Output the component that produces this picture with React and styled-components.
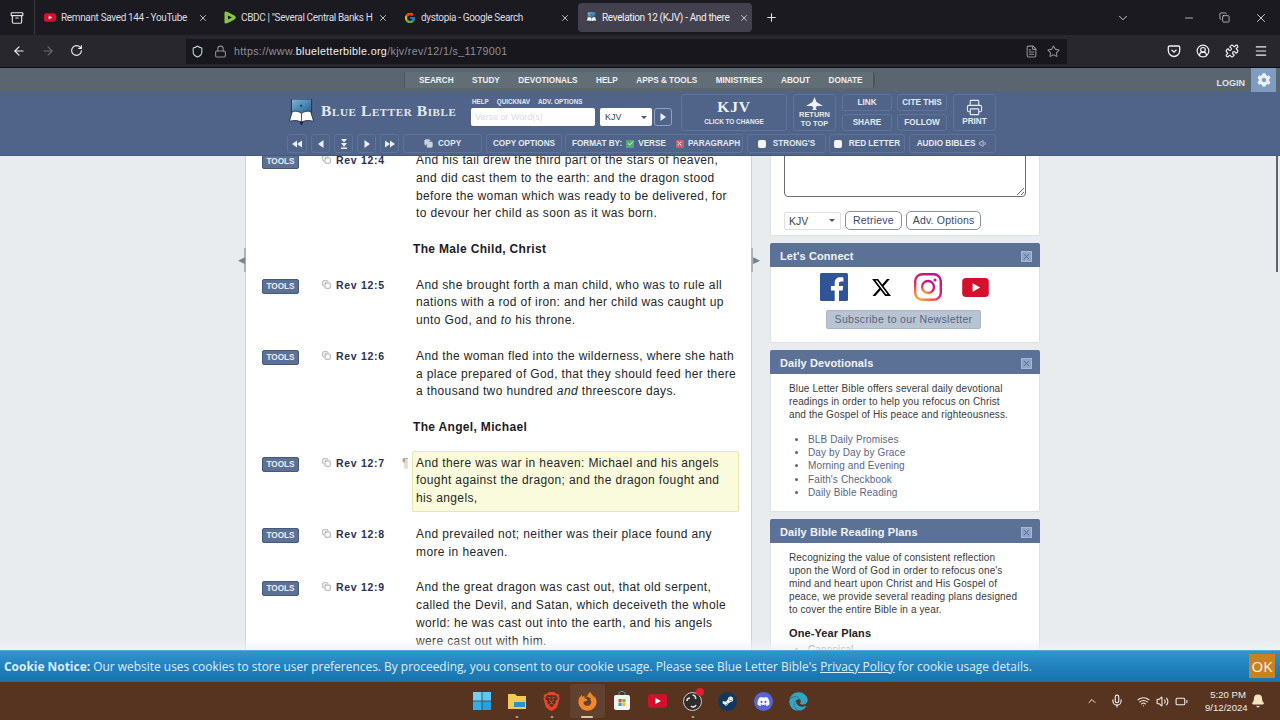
import React from "react";
import styled, {createGlobalStyle} from "styled-components";
import {
    Archive, ArrowLeft, ArrowRight, Bell, Check, ChevronDown, ChevronUp, Copy, FileText, Lock, Menu, Mic, Minus,
    Plus, Printer, Puzzle, RotateCw, Shield, Star, Volume1, Volume2, Wifi, X, CircleUserRound, Battery
} from "lucide-react";
import {FaCog, FaDiscord, FaEdge, FaFirefoxBrowser, FaSteamSymbol} from "react-icons/fa";
import {FaXTwitter} from "react-icons/fa6";
import {FcGoogle} from "react-icons/fc";
import {SiBrave} from "react-icons/si";

const GlobalStyle = createGlobalStyle`
  html, body {
    margin: 0;
    padding: 0;
    width: 1280px;
    height: 720px;
    overflow: hidden;
    background: #e8ecef;
    font-family: "Liberation Sans", Arial, sans-serif;
  }
  * {
    box-sizing: border-box;
  }
`

const Page = styled.div`
  width: 1280px;
  height: 720px;
  display: flex;
  flex-direction: column;
  overflow: hidden;
`

/* browser chrome */
const TabStrip = styled.div`
  height: 35px;
  flex: none;
  background: #1b1a20;
  display: flex;
  align-items: center;
  color: #e4e4e8;
`

const SideToggle = styled.div`
  width: 35px;
  height: 35px;
  display: flex;
  align-items: center;
  justify-content: center;
  border-right: 1px solid #3a3940;
`

const Tab = styled.div`
  width: ${props => props.$width}px;
  height: 29px;
  margin-left: ${props => props.$left || 0}px;
  padding: 0 5px 0 ${props => props.$padLeft || 9}px;
  display: flex;
  align-items: center;
  gap: 5px;
  font-family: Roboto, sans-serif;
  font-size: 10px;
  letter-spacing: -.35px;
  border-radius: 4px;
  background: ${props => props.$active ? "#42414d" : "transparent"};
  color: ${props => props.$active ? "#f0f0f4" : "#dcdce0"};
`

const TabTitle = styled.span`
  width: ${props => props.$width}px;
  flex: none;
  white-space: nowrap;
`

const TabClose = styled.span`
  margin-left: auto;
  margin-right: ${props => props.$right || 0}px;
  display: flex;
  color: #d8d8dc;
`

const Favicon = styled.span`
  width: 12px;
  height: 12px;
  flex: none;
  display: flex;
  align-items: center;
  justify-content: center;
`

const WindowButtons = styled.div`
  margin-left: auto;
  display: flex;
  align-items: center;
  gap: 24px;
  padding-right: 12px;
`

const NavBar = styled.div`
  height: 33px;
  flex: none;
  background: #28272e;
  border-bottom: 1px solid #0c0c0f;
  display: flex;
  align-items: center;
  color: #f0f0f4;
`

const NavButtons = styled.div`
  width: 186px;
  padding-left: 12px;
  display: flex;
  gap: 15px;
`

const UrlBar = styled.div`
  width: 881px;
  height: 25px;
  background: #18171d;
  display: flex;
  align-items: center;
  padding: 0 7px 0 5px;
  gap: 7px;
  font-size: 10.7px;
  letter-spacing: .34px;
  color: #8f8f98;
`

const UrlHost = styled.span`
  color: #f2f2f5;
`

const UrlEnd = styled.div`
  margin-left: auto;
  display: flex;
  gap: 9px;
`

const NavRight = styled.div`
  margin-left: 100px;
  display: flex;
  gap: 15px;
`

/* site header */
const SiteNav = styled.div`
  height: 24px;
  flex: none;
  background: #5a666f;
  display: flex;
  align-items: center;
  padding-left: 404px;
  position: relative;
`

const SiteNavLinks = styled.div`
  height: 16px;
  width: 470px;
  background: #626e76;
  border-left: 1px solid #4a555d;
  border-right: 1px solid #4a555d;
  display: flex;
  align-items: center;
  padding-left: 14px;
  gap: 18.5px;
  box-shadow: 4px 0 0 -3px #4a555d;
`

const SiteNavLink = styled.span`
  font-size: 8.2px;
  font-weight: 700;
  color: #eef1f4;
  white-space: nowrap;
`

const LoginArea = styled.div`
  margin-left: auto;
  display: flex;
  align-items: center;
  height: 100%;
  padding-right: 4px;
  gap: 6px;
`

const LoginText = styled.span`
  font-size: 9px;
  font-weight: 700;
  color: #dfe5ea;
  padding-top: 5px;
`

const GearBox = styled.span`
  width: 25px;
  height: 24px;
  background: #7f9cc0;
  display: flex;
  align-items: center;
  justify-content: center;
  color: #eef3f8;
`

const Toolbar = styled.div`
  height: 64px;
  flex: none;
  background: #4f6488;
  display: flex;
  flex-direction: column;
  align-items: center;
  padding-left: 4px;
  border-bottom: 1px solid #44587a;
`

const ToolRow = styled.div`
  width: 710px;
  height: ${props => props.$height}px;
  margin-top: ${props => props.$top}px;
  display: flex;
  gap: ${props => props.$gap || 0}px;
  flex: none;
`

const ToolBox = styled.div`
  width: ${props => props.$width}px;
  height: ${props => props.$height || 19}px;
  margin-left: ${props => props.$left || 0}px;
  flex: none;
  border: 1px solid #5d7399;
  border-radius: 3px;
  display: flex;
  flex-direction: ${props => props.$column ? "column" : "row"};
  align-items: center;
  justify-content: center;
  gap: ${props => props.$spread || 0}px;
  font-size: 8.2px;
  line-height: 11px;
  font-weight: 700;
  color: #e4eaf1;
  text-align: center;
  white-space: nowrap;
`

const LogoLink = styled.div`
  width: 184px;
  padding: 4px 0 0 1px;
  display: flex;
  gap: 6px;
  align-items: center;
  height: 32px;
`

const LogoText = styled.span`
  font-family: "Liberation Serif", serif;
  font-variant: small-caps;
  font-weight: 700;
  font-size: 15.6px;
  line-height: 16px;
  letter-spacing: .6px;
  color: #e3e9f0;
  white-space: nowrap;
  margin-top: -2px;
`

const SearchArea = styled.div`
  width: 210px;
  display: flex;
  flex-direction: column;
`

const MiniLinks = styled.div`
  display: flex;
  gap: 8px;
  height: 14px;
  padding-left: 1px;
  font-size: 6.3px;
  font-weight: 700;
  color: #e4eaf1;
  align-items: center;
`

const SearchInputs = styled.div`
  display: flex;
  align-items: center;
  gap: 5px;
  height: 18px;
`

const VerseInput = styled.div`
  width: 124px;
  height: 18px;
  background: #fff;
  border-radius: 2px;
  padding-left: 4px;
  font-size: 9px;
  line-height: 18px;
  color: #d9dce2;
`

const VersionSelect = styled.div`
  width: 52px;
  height: 18px;
  background: #fff;
  border-radius: 2px;
  display: flex;
  justify-content: space-between;
  align-items: center;
  padding: 0 5px;
  font-size: 9px;
  color: #444;
`

const Caret = styled.span`
  width: 0;
  height: 0;
  border-left: 3px solid transparent;
  border-right: 3px solid transparent;
  border-top: 3px solid #555;
`

const GoButton = styled.span`
  width: 18px;
  height: 18px;
  margin-left: -3px;
  border: 1px solid #8ea2bf;
  border-radius: 3px;
  display: flex;
  align-items: center;
  justify-content: center;
`

const KjvTitle = styled.span`
  font-family: "Liberation Serif", serif;
  font-size: 15.5px;
  line-height: 15px;
  font-weight: 700;
  letter-spacing: .8px;
  color: #eef2f6;
`

const KjvHint = styled.span`
  font-size: 6.4px;
  line-height: 9px;
  margin-top: 3px;
`

const ReturnLabel = styled.span`
  font-size: 7.4px;
  line-height: 9px;
`

const ToolPair = styled.div`
  display: flex;
  flex-direction: column;
  justify-content: space-between;
  margin-left: ${props => props.$left || 0}px;
`

const Tick = styled.span`
  width: 8px;
  height: 8px;
  flex: none;
  border-radius: ${props => props.$plain ? "2px" : "1px"};
  background: ${props => props.$color || "#f2f4f7"};
  display: flex;
  align-items: center;
  justify-content: center;
  color: #fff;
  margin-left: ${props => props.$side || 0}px;
`

const FormatGroup = styled(ToolBox)`
  justify-content: flex-start;
  padding-left: 6px;
  gap: 4px;
`

/* content */
const Content = styled.div`
  flex: 1;
  min-height: 0;
  background: #e8ecef;
  display: flex;
  justify-content: center;
  gap: 18px;
  padding-left: 5px;
  overflow: hidden;
  position: relative;
`

const BottomFade = styled.div`
  position: absolute;
  left: 0;
  right: 0;
  bottom: 0;
  height: 12px;
  background: linear-gradient(rgba(240, 243, 246, 0), rgba(240, 243, 246, .85));
`

const ScrollThumb = styled.div`
  position: absolute;
  right: 2px;
  top: 0;
  width: 2px;
  height: 116px;
  background: #60656b;
`

const MainColumn = styled.div`
  width: 507px;
  flex: none;
  background: #fff;
  border-left: 1px solid #ccd3da;
  border-right: 1px solid #ccd3da;
  position: relative;
`

const VerseList = styled.div`
  margin-top: -4px;
  padding-left: 16px;
  color: #262626;
`

const SideHandle = styled.span`
  position: absolute;
  top: 92px;
  ${props => props.$right ? "right: -8px;" : "left: -8px;"}
  width: 8px;
  height: 24px;
  display: flex;
  align-items: center;
  justify-content: center;
  color: #75818e;
  font-size: 9px;
  border-${props => props.$right ? "left" : "right"}: 2px solid #aab3bc;
`

const SectionHeading = styled.h3`
  margin: 0 0 17.8px 151px;
  font-size: 12px;
  line-height: 17.8px;
  font-weight: 700;
  letter-spacing: .33px;
  color: #1c1c24;
`

const VerseRow = styled.div`
  display: grid;
  grid-template-columns: 60px 14px 69px 11px 323px;
  margin-bottom: 17.8px;
`

const ToolsButton = styled.span`
  width: 37px;
  height: 15px;
  margin-top: 2px;
  background: #5c7194;
  border: 1px solid #45597a;
  border-radius: 2px;
  color: #e8edf3;
  font-size: 8.2px;
  font-weight: 700;
  line-height: 14px;
  text-align: center;
`

const CopyMark = styled.span`
  display: flex;
  align-items: flex-start;
  padding-top: 3px;
  color: #8a8f96;
`

const VerseRef = styled.span`
  padding-top: 1px;
  font-size: 10.5px;
  line-height: 15px;
  font-weight: 700;
  letter-spacing: .7px;
  color: #2b3153;
`

const Pilcrow = styled.span`
  font-size: 12px;
  line-height: 17px;
  color: #a6a6a6;
  margin-left: -3px;
`

const VerseText = styled.div`
  font-size: 12px;
  line-height: 17.8px;
  letter-spacing: .38px;
  ${props => props.$selected ? `
    margin: -3.5px 0 -4.5px -4px;
    width: 327px;
    padding: 2.5px 2px 3.5px 3px;
    background: #fafbdc;
    border: 1px solid #e3e6ae;
    border-radius: 2px;
  ` : ""}
`

const SideColumn = styled.div`
  width: 270px;
  flex: none;
  display: flex;
  flex-direction: column;
`

const Panel = styled.section`
  background: #fff;
  border: 1px solid #dde2e7;
  border-top: none;
  border-radius: 2px;
  margin-bottom: ${props => props.$gap}px;
  flex: none;
`

const PanelHead = styled.div`
  height: 24px;
  margin: 0 -1px;
  padding: 2px 8px 0 10px;
  background: #5b7296;
  border-radius: 2px 2px 0 0;
  display: flex;
  align-items: center;
  justify-content: space-between;
  color: #f1f4f8;
  font-size: 11px;
  font-weight: 700;
  letter-spacing: .1px;
`

const PanelClose = styled.span`
  width: 11px;
  height: 11px;
  background: #90a5c2;
  border: 1px solid #a8b9d0;
  display: flex;
  align-items: center;
  justify-content: center;
  color: #526a8f;
`

const FormPanel = styled(Panel)`
  margin-top: -24px;
  height: 104px;
  padding: 0 13px;
`

const Notes = styled.textarea`
  display: block;
  width: 242px;
  height: 65px;
  background: #fff;
  border: 1px solid #6c6c6c;
  border-radius: 4px;
`

const FormRow = styled.div`
  margin-top: 14px;
  display: flex;
  gap: 4px;
  align-items: center;
`

const KjvSelect = styled.div`
  width: 57px;
  height: 18px;
  border: 1px solid #dcdfe3;
  border-radius: 2px;
  display: flex;
  align-items: center;
  justify-content: space-between;
  padding: 0 5px 0 4px;
  font-size: 10.5px;
  color: #444;
`

const PillButton = styled.span`
  height: 19px;
  padding: 0 ${props => props.$pad}px;
  border: 1px solid #8a8f96;
  border-radius: 5px;
  font-size: 10.5px;
  line-height: 17px;
  letter-spacing: .2px;
  color: #3d4768;
`

const Socials = styled.div`
  height: 28px;
  margin-top: 6px;
  display: flex;
  align-items: center;
  padding-left: 49px;
`

const SocialSlot = styled.span`
  width: ${props => props.$width}px;
  flex: none;
  display: flex;
`

const NewsletterWrap = styled.div`
  display: flex;
  justify-content: center;
  margin: 9px 0 13px -3px;
`

const NewsletterButton = styled.span`
  width: 155px;
  height: 19px;
  background: #b9c4d2;
  border: 1px solid #aab6c6;
  border-radius: 2px;
  text-align: center;
  font-size: 10.5px;
  line-height: 17px;
  letter-spacing: .33px;
  color: #56657e;
`

const PanelBody = styled.div`
  padding: 7.5px 20px ${props => props.$bottom || 0}px 18px;
  font-size: 10px;
  line-height: 13px;
  letter-spacing: .12px;
  color: #3a3a3a;
`

const PanelText = styled.p`
  margin: 0;
`

const PlanList = styled.ul`
  margin: ${props => props.$top}px 0 0;
  padding: 0 0 0 19px;
  color: #5b6580;
  line-height: 13.35px;
`

const PlanHeading = styled.h4`
  margin: 11px 0 3px;
  font-size: 11px;
  line-height: 13px;
  font-weight: 700;
  letter-spacing: .1px;
  color: #222;
`

/* footer bits */
const CookieBar = styled.div`
  height: 32px;
  flex: none;
  background: linear-gradient(#3195d0, #1f7eb9 60%, #1a73ab);
  border-top: 1px solid #5aa8d6;
  display: flex;
  align-items: center;
  padding: 0 0 1px 4px;
  font-family: "Open Sans", sans-serif;
  font-size: 11.95px;
  color: #dbeeff;
  white-space: nowrap;
`

const CookieLink = styled.span`
  text-decoration: underline;
`

const OkButton = styled.span`
  margin-left: auto;
  margin-right: 5px;
  width: 26px;
  height: 24px;
  background: #c9821f;
  color: #fbf6ea;
  font-size: 15px;
  line-height: 24px;
  text-align: center;
`

const Taskbar = styled.div`
  height: 38px;
  flex: none;
  background: #56341f;
  display: flex;
  align-items: center;
  position: relative;
  color: #f0ece8;
`

const TaskIcons = styled.div`
  margin-left: 464px;
  display: flex;
  align-items: center;
`

const TaskIcon = styled.span`
  width: 35.2px;
  height: 34px;
  display: flex;
  align-items: center;
  justify-content: center;
  position: relative;
  border-radius: 3px;
  background: ${props => props.$active ? "rgba(255,255,255,.07)" : "transparent"};
  &::after {
    content: "";
    display: ${props => props.$open ? "block" : "none"};
    position: absolute;
    bottom: 0;
    left: 50%;
    width: ${props => props.$active ? 12 : 3}px;
    height: 2px;
    transform: translateX(-50%);
    border-radius: 1px;
    background: ${props => props.$active ? "#d9c9a8" : "#a69c92"};
  }
`

const IconDisc = styled.span`
  width: 19px;
  height: 19px;
  border-radius: 50%;
  background: ${props => props.$color};
  display: flex;
  align-items: center;
  justify-content: center;
  color: #fff;
`

const Badge = styled.span`
  position: absolute;
  top: 4px;
  right: 6px;
  width: 8px;
  height: 8px;
  border-radius: 50%;
  background: #e0202a;
`

const Tray = styled.div`
  margin-left: auto;
  display: flex;
  align-items: center;
  padding-right: 15px;
`

const TraySlot = styled.span`
  width: ${props => props.$width}px;
  display: flex;
  justify-content: center;
`

const Clock = styled.div`
  width: 46px;
  margin-left: 14.5px;
  padding-right: 5px;
  font-size: 9.6px;
  line-height: 13px;
  text-align: right;
  white-space: nowrap;
`

const LogoBook = ({size = 27}) => (
    <svg width={size} height={size} viewBox="0 0 27 28">
        <defs>
            <linearGradient id="logoSky" x1="0" y1="0" x2="1" y2="1">
                <stop offset="0" stopColor="#7fb6d8"/>
                <stop offset="1" stopColor="#1d5f92"/>
            </linearGradient>
        </defs>
        <rect x="3" y="0" width="21" height="15" rx="1" fill="url(#logoSky)" stroke="#1f3350"/>
        <circle cx="13" cy="7" r="1" fill="#15243c"/>
        <path d="M1 23 L4 13 C8 12 11 13 13.5 15 C16 13 19 12 23 13 L26 23 C21 22 17 22 13.5 24 C10 22 6 22 1 23Z" fill="#fff" stroke="#13233c" strokeWidth=".8"/>
        <path d="M13.5 15 V24 M12 24 L13.5 27 L15 24Z" stroke="#13233c" strokeWidth=".8" fill="#13233c"/>
    </svg>
)

const Glyph = ({d, size = 10}) => (
    <svg width={size} height={size} viewBox="0 0 10 10"><path d={d} fill="#e9eef4"/></svg>
)

const Pocket = () => (
    <svg width="14" height="14" viewBox="0 0 14 14" fill="none" stroke="#f0f0f4" strokeWidth="1.3">
        <path d="M2.5 2 H11.5 C12.3 2 12.7 2.5 12.7 3.2 V6.5 C12.7 10 10 12.5 7 12.5 C4 12.5 1.3 10 1.3 6.5 V3.2 C1.3 2.5 1.7 2 2.5 2Z"/>
        <path d="M4.5 5.8 L7 8.2 L9.5 5.8"/>
    </svg>
)

const Facebook = () => (
    <svg width="28" height="28" viewBox="0 0 28 28">
        <rect width="28" height="28" rx="1.5" fill="#2f5597"/>
        <path d="M19 28 V17.5 H22.6 L23.2 13 H19 V10.6 C19 9.3 19.4 8.4 21.2 8.4 H23.4 V4.4 C23 4.3 21.7 4.2 20.2 4.2 C17 4.2 14.7 6.2 14.7 9.9 V13 H11 V17.5 H14.7 V28Z" fill="#fff"/>
    </svg>
)

const Instagram = () => (
    <svg width="28" height="28" viewBox="0 0 28 28">
        <defs>
            <linearGradient id="instaRing" x1="0.2" y1="1" x2="0.8" y2="0">
                <stop offset="0" stopColor="#f9a03c"/>
                <stop offset=".4" stopColor="#e6245e"/>
                <stop offset="1" stopColor="#b3148c"/>
            </linearGradient>
        </defs>
        <rect x="1.2" y="1.2" width="25.6" height="25.6" rx="7" fill="none" stroke="url(#instaRing)" strokeWidth="2.4"/>
        <circle cx="14" cy="14" r="6" fill="none" stroke="url(#instaRing)" strokeWidth="2.4"/>
        <circle cx="21" cy="7" r="1.6" fill="#c81e78"/>
    </svg>
)

const YouTubeMark = ({width, height, radius}) => (
    <svg width={width} height={height} viewBox="0 0 28 20">
        <rect width="28" height="20" rx={radius} fill="#d5102c"/>
        <path d="M11 5.5 L19 10 L11 14.5Z" fill="#fff"/>
    </svg>
)

const Rumble = () => (
    <svg width="12" height="13" viewBox="0 0 12 13">
        <path d="M2 .5 C1 .5 .5 1 .5 2 V11 C.5 12 1 12.5 2 12.5 C3 12.5 10 9 11 8 C12 7 12 6 11 5 C10 4 3 .5 2 .5Z" fill="#85c742"/>
        <path d="M4 4.5 L8 6.5 L4 8.5Z" fill="#1c1b22"/>
    </svg>
)

const WindowsLogo = () => (
    <svg width="18" height="18" viewBox="0 0 18 18">
        <rect width="8.6" height="8.6" fill="#6fd0f5"/>
        <rect x="9.4" width="8.6" height="8.6" fill="#5fc6f3"/>
        <rect y="9.4" width="8.6" height="8.6" fill="#2fb0ee"/>
        <rect x="9.4" y="9.4" width="8.6" height="8.6" fill="#1fa2e8"/>
    </svg>
)

const Folder = () => (
    <svg width="20" height="18" viewBox="0 0 20 18">
        <path d="M1 2 H8 L10 4 H19 V17 H1Z" fill="#f6c94e"/>
        <rect x="7" y="10" width="11" height="5" fill="#2f8fcf"/>
    </svg>
)

const StoreBag = () => (
    <svg width="18" height="20" viewBox="0 0 18 20">
        <path d="M6 5 V2.5 C6 1 7 .5 9 .5 C11 .5 12 1 12 2.5 V5" stroke="#3ba7e5" fill="none"/>
        <rect x="1" y="4" width="16" height="15" rx="2" fill="#f2f2f0"/>
        <rect x="5.5" y="8" width="3.2" height="3.2" fill="#e8502a"/>
        <rect x="9.3" y="8" width="3.2" height="3.2" fill="#7fb82a"/>
        <rect x="5.5" y="11.8" width="3.2" height="3.2" fill="#2a9fe0"/>
        <rect x="9.3" y="11.8" width="3.2" height="3.2" fill="#f5b920"/>
    </svg>
)

const ObsLogo = () => (
    <svg width="19" height="19" viewBox="0 0 19 19">
        <circle cx="9.5" cy="9.5" r="9" fill="#2f2d2c" stroke="#cfcac4" strokeWidth="1"/>
        <path d="M9.5 3 a3 3 0 0 1 3 4 M13 13 a3 3 0 0 1 -5 1 M4 9 a3 3 0 0 1 3 -3" stroke="#e6e2dc" strokeWidth="1.6" fill="none"/>
    </svg>
)

const verses = [
    {ref: "Rev 12:4", text: <>And his tail drew the third part of the stars of heaven, and did cast them to the earth: and the dragon stood before the woman which was ready to be delivered, for to devour her child as soon as it was born.</>},
    {heading: "The Male Child, Christ"},
    {ref: "Rev 12:5", text: <>And she brought forth a man child, who was to rule all nations with a rod of iron: and her child was caught up unto God, and <i>to</i> his throne.</>},
    {ref: "Rev 12:6", text: <>And the woman fled into the wilderness, where she hath a place prepared of God, that they should feed her there a thousand two hundred <i>and</i> threescore days.</>},
    {heading: "The Angel, Michael"},
    {ref: "Rev 12:7", selected: true, text: <>And there was war in heaven: Michael and his angels fought against the dragon; and the dragon fought and his angels,</>},
    {ref: "Rev 12:8", text: <>And prevailed not; neither was their place found any more in heaven.</>},
    {ref: "Rev 12:9", text: <>And the great dragon was cast out, that old serpent, called the Devil, and Satan, which deceiveth the whole world: he was cast out into the earth, and his angels were cast out with him.</>},
]

const siteLinks = ["SEARCH", "STUDY", "DEVOTIONALS", "HELP", "APPS & TOOLS", "MINISTRIES", "ABOUT", "DONATE"]
const devotionals = ["BLB Daily Promises", "Day by Day by Grace", "Morning and Evening", "Faith's Checkbook", "Daily Bible Reading"]

const App = () => {
    return (
        <Page>
            <GlobalStyle/>
            <TabStrip>
                <SideToggle><Archive size={14}/></SideToggle>
                <Tab $width={180}>
                    <Favicon><YouTubeMark width={12} height={9} radius={5}/></Favicon>
                    <TabTitle $width={130}>Remnant Saved 144 - YouTube</TabTitle>
                    <TabClose $right={2}><X size={10}/></TabClose>
                </Tab>
                <Tab $width={180}>
                    <Favicon><Rumble/></Favicon>
                    <TabTitle $width={131}>CBDC | "Several Central Banks H</TabTitle>
                    <TabClose $right={2}><X size={10}/></TabClose>
                </Tab>
                <Tab $width={180}>
                    <Favicon><FcGoogle size={12}/></Favicon>
                    <TabTitle $width={110}>dystopia - Google Search</TabTitle>
                    <TabClose><X size={10}/></TabClose>
                </Tab>
                <Tab $width={174} $left={3} $padLeft={7} $active>
                    <Favicon><LogoBook size={11}/></Favicon>
                    <TabTitle $width={132}>Revelation 12 (KJV) - And there</TabTitle>
                    <TabClose $right={1}><X size={10}/></TabClose>
                </Tab>
                <Plus size={13} style={{marginLeft: 13}}/>
                <WindowButtons>
                    <ChevronDown size={14} strokeWidth={1.5} style={{marginRight: 29}}/>
                    <Minus size={12} strokeWidth={1.5}/>
                    <Copy size={11} strokeWidth={1.5}/>
                    <X size={14} strokeWidth={1.5}/>
                </WindowButtons>
            </TabStrip>
            <NavBar>
                <NavButtons>
                    <ArrowLeft size={14}/>
                    <ArrowRight size={14} color="#6a6a72"/>
                    <RotateCw size={13}/>
                </NavButtons>
                <UrlBar>
                    <Shield size={13} color="#b8d8da" style={{marginRight: 3}}/>
                    <Lock size={13}/>
                    <span>https://www.<UrlHost>blueletterbible.org</UrlHost>/kjv/rev/12/1/s_1179001</span>
                    <UrlEnd>
                        <FileText size={13}/>
                        <Star size={13}/>
                    </UrlEnd>
                </UrlBar>
                <NavRight>
                    <Pocket/>
                    <CircleUserRound size={14}/>
                    <Puzzle size={14}/>
                    <Menu size={14}/>
                </NavRight>
            </NavBar>
            <SiteNav>
                <SiteNavLinks>
                    {siteLinks.map(link => <SiteNavLink key={link}>{link}</SiteNavLink>)}
                </SiteNavLinks>
                <LoginArea>
                    <LoginText>LOGIN</LoginText>
                    <GearBox><FaCog size={14}/></GearBox>
                </LoginArea>
            </SiteNav>
            <Toolbar>
                <ToolRow $height={37} $top={2}>
                    <LogoLink>
                        <LogoBook/>
                        <LogoText>Blue Letter Bible</LogoText>
                    </LogoLink>
                    <SearchArea>
                        <MiniLinks><span>HELP</span><span>QUICKNAV</span><span>ADV. OPTIONS</span></MiniLinks>
                        <SearchInputs>
                            <VerseInput>Verse or Word(s)</VerseInput>
                            <VersionSelect>KJV<Caret/></VersionSelect>
                            <GoButton><Glyph d="M2.5 1 L8 5 L2.5 9Z"/></GoButton>
                        </SearchInputs>
                    </SearchArea>
                    <ToolBox $width={106} $height={37} $column>
                        <KjvTitle>KJV</KjvTitle>
                        <KjvHint>CLICK TO CHANGE</KjvHint>
                    </ToolBox>
                    <ToolBox $width={43} $height={37} $left={6} $column>
                        <svg width="17" height="13" viewBox="0 0 17 13"><path d="M8.5 0 L10.5 5 L17 9 L11 9 L9.5 11 L11 13 L6 13 L7.5 11 L6 9 L0 9 L6.5 5Z" fill="#eef2f6"/></svg>
                        <ReturnLabel>RETURN<br/>TO TOP</ReturnLabel>
                    </ToolBox>
                    <ToolPair $left={6}>
                        <ToolBox $width={50} $height={17}>LINK</ToolBox>
                        <ToolBox $width={50} $height={17}>SHARE</ToolBox>
                    </ToolPair>
                    <ToolPair $left={5}>
                        <ToolBox $width={50} $height={17}>CITE THIS</ToolBox>
                        <ToolBox $width={50} $height={17}>FOLLOW</ToolBox>
                    </ToolPair>
                    <ToolBox $width={43} $height={37} $left={6} $column>
                        <Printer size={17} strokeWidth={1.6}/>
                        PRINT
                    </ToolBox>
                </ToolRow>
                <ToolRow $height={19} $top={3} $gap={4}>
                    <ToolBox $width={20}><Glyph d="M5 1.5 L0 5 L5 8.5Z M10 1.5 L5 5 L10 8.5Z"/></ToolBox>
                    <ToolBox $width={19}><Glyph d="M7.5 1 L2 5 L7.5 9Z"/></ToolBox>
                    <ToolBox $width={19}><Glyph d="M2 0 H8 L5 3.5Z M2 4 H8 L5 8Z M2 8.6 H8 V10 H2Z"/></ToolBox>
                    <ToolBox $width={19}><Glyph d="M2.5 1 L8 5 L2.5 9Z"/></ToolBox>
                    <ToolBox $width={19}><Glyph d="M0 1.5 L5 5 L0 8.5Z M5 1.5 L10 5 L5 8.5Z"/></ToolBox>
                    <ToolBox $width={79} $spread={5}><Copy size={9} color="#c9d2de" fill="#c9d2de"/>COPY</ToolBox>
                    <ToolBox $width={76}>COPY OPTIONS</ToolBox>
                    <FormatGroup $width={178} $left={-1}>
                        FORMAT BY:
                        <Tick $color="#4fae62"><Check size={7} strokeWidth={3}/></Tick>
                        VERSE
                        <Tick $color="#d9556b" $side={6}><X size={7} strokeWidth={3}/></Tick>
                        PARAGRAPH
                    </FormatGroup>
                    <ToolBox $width={79} $spread={7}><Tick $plain/>STRONG'S</ToolBox>
                    <ToolBox $width={76} $left={-1} $spread={7}><Tick $plain/>RED LETTER</ToolBox>
                    <ToolBox $width={87} $spread={4}>AUDIO BIBLES<Volume1 size={9}/></ToolBox>
                </ToolRow>
            </Toolbar>
            <Content>
                <MainColumn>
                    <SideHandle>◀</SideHandle>
                    <SideHandle $right>▶</SideHandle>
                    <VerseList>
                        {verses.map(verse => verse.heading ? (
                            <SectionHeading key={verse.heading}>{verse.heading}</SectionHeading>
                        ) : (
                            <VerseRow key={verse.ref}>
                                <ToolsButton>TOOLS</ToolsButton>
                                <CopyMark><Copy size={9}/></CopyMark>
                                <VerseRef>{verse.ref}</VerseRef>
                                <Pilcrow>{verse.selected ? "¶" : ""}</Pilcrow>
                                <VerseText $selected={verse.selected}>{verse.text}</VerseText>
                            </VerseRow>
                        ))}
                    </VerseList>
                </MainColumn>
                <SideColumn>
                    <FormPanel $gap={7}>
                        <Notes readOnly/>
                        <FormRow>
                            <KjvSelect>KJV<Caret/></KjvSelect>
                            <PillButton $pad={7}>Retrieve</PillButton>
                            <PillButton $pad={6}>Adv. Options</PillButton>
                        </FormRow>
                    </FormPanel>
                    <Panel $gap={7}>
                        <PanelHead>Let's Connect<PanelClose><X size={9} strokeWidth={2.4}/></PanelClose></PanelHead>
                        <Socials>
                            <SocialSlot $width={51}><Facebook/></SocialSlot>
                            <SocialSlot $width={43}><FaXTwitter size={21} color="#000"/></SocialSlot>
                            <SocialSlot $width={48}><Instagram/></SocialSlot>
                            <SocialSlot $width={28}><YouTubeMark width={27} height={19} radius={4}/></SocialSlot>
                        </Socials>
                        <NewsletterWrap><NewsletterButton>Subscribe to our Newsletter</NewsletterButton></NewsletterWrap>
                    </Panel>
                    <Panel $gap={7}>
                        <PanelHead>Daily Devotionals<PanelClose><X size={9} strokeWidth={2.4}/></PanelClose></PanelHead>
                        <PanelBody $bottom={12}>
                            <PanelText>Blue Letter Bible offers several daily devotional readings in order to help you refocus on Christ and the Gospel of His peace and righteousness.</PanelText>
                            <PlanList $top={12}>
                                {devotionals.map(item => <li key={item}>{item}</li>)}
                            </PlanList>
                        </PanelBody>
                    </Panel>
                    <Panel $gap={0}>
                        <PanelHead>Daily Bible Reading Plans<PanelClose><X size={9} strokeWidth={2.4}/></PanelClose></PanelHead>
                        <PanelBody>
                            <PanelText>Recognizing the value of consistent reflection upon the Word of God in order to refocus one's mind and heart upon Christ and His Gospel of peace, we provide several reading plans designed to cover the entire Bible in a year.</PanelText>
                            <PlanHeading>One-Year Plans</PlanHeading>
                            <PlanList $top={0}><li>Canonical</li></PlanList>
                        </PanelBody>
                    </Panel>
                </SideColumn>
                <BottomFade/>
                <ScrollThumb/>
            </Content>
            <CookieBar>
                <b>Cookie Notice:</b>&nbsp;Our website uses cookies to store user preferences. By proceeding, you consent to our cookie usage. Please see Blue Letter Bible's&nbsp;<CookieLink>Privacy Policy</CookieLink>&nbsp;for cookie usage details.
                <OkButton>OK</OkButton>
            </CookieBar>
            <Taskbar>
                <TaskIcons>
                    <TaskIcon><WindowsLogo/></TaskIcon>
                    <TaskIcon $open><Folder/></TaskIcon>
                    <TaskIcon $open><SiBrave size={19} color="#e8442c"/></TaskIcon>
                    <TaskIcon $open $active><FaFirefoxBrowser size={19} color="#f4862a"/></TaskIcon>
                    <TaskIcon><StoreBag/></TaskIcon>
                    <TaskIcon><YouTubeMark width={19} height={14} radius={4}/></TaskIcon>
                    <TaskIcon $open><ObsLogo/><Badge/></TaskIcon>
                    <TaskIcon><IconDisc $color="#12395c"><FaSteamSymbol size={12}/></IconDisc></TaskIcon>
                    <TaskIcon><IconDisc $color="#5865d8"><FaDiscord size={13}/></IconDisc></TaskIcon>
                    <TaskIcon><FaEdge size={19} color="#2fa6c8"/></TaskIcon>
                </TaskIcons>
                <Tray>
                    <TraySlot $width={17}><ChevronUp size={12}/></TraySlot>
                    <TraySlot $width={33}><Mic size={14}/></TraySlot>
                    <TraySlot $width={19}><Wifi size={13}/></TraySlot>
                    <TraySlot $width={19}><Volume2 size={13}/></TraySlot>
                    <TraySlot $width={19}><Battery size={13}/></TraySlot>
                    <Clock>5:20 PM<br/>9/12/2024</Clock>
                    <TraySlot $width={14}><Bell size={14} fill="#f3e6c4" color="#f3e6c4"/></TraySlot>
                </Tray>
            </Taskbar>
        </Page>
    )
}

export default App
